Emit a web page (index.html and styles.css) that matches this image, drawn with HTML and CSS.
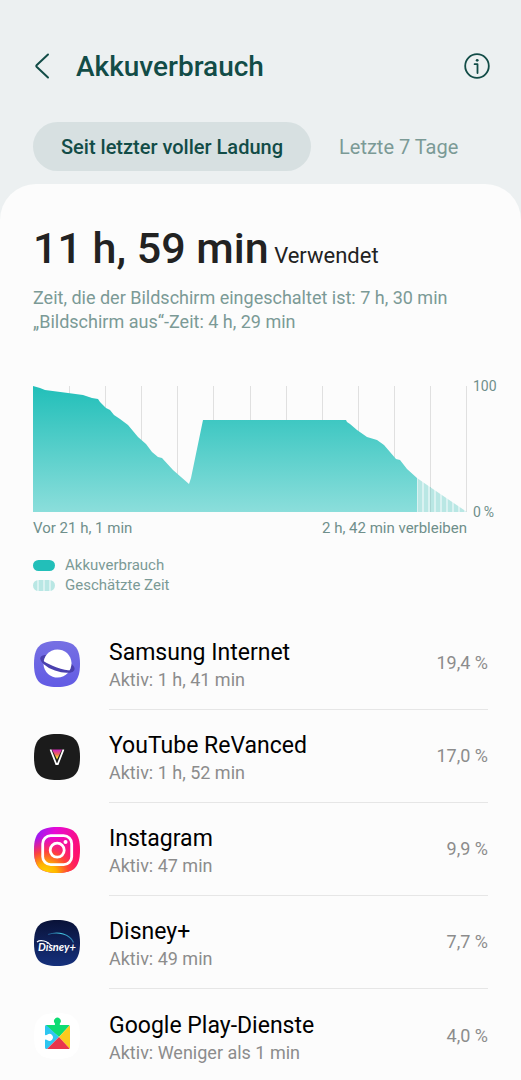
FILE: index.html
```html
<!DOCTYPE html>
<html lang="de">
<head>
    <meta charset="UTF-8">
    <meta name="viewport" content="width=device-width, initial-scale=1.0">
    <title>Akkuverbrauch</title>
    <link rel="stylesheet" href="styles.css">
</head>
<body>

    <header class="header">
        <button class="icon-btn" aria-label="Zurück">
            <svg width="18" height="28" viewBox="0 0 18 28"><path d="M15 2.500 L3.600 13.200 Q2.800 14 3.600 14.800 L15 25.500" fill="none" stroke="currentColor" stroke-width="2" stroke-linecap="round"/></svg>
        </button>
        <h1 class="title">Akkuverbrauch</h1>
        <button class="icon-btn" aria-label="Info">
            <svg width="26" height="26" viewBox="0 0 26 26" fill="none" stroke="currentColor">
                <circle cx="13" cy="13" r="11.8" stroke-width="1.8"/>
                <path d="M10.6 11.2 H13.5 V20" stroke-width="1.8" stroke-linejoin="round" stroke-linecap="round"/>
                <circle cx="13.2" cy="7.3" r="1.4" fill="currentColor" stroke="none"/>
            </svg>
        </button>
    </header>

    <nav class="tabs">
        <button class="tab active">Seit letzter voller Ladung</button>
        <button class="tab">Letzte 7 Tage</button>
    </nav>

    <main class="card">
        <!-- Summary -->
        <section class="summary">
            <p class="total"><strong>11 h, 59 min</strong> Verwendet</p>
            <p class="details">Zeit, die der Bildschirm eingeschaltet ist: 7 h, 30 min<br>„Bildschirm aus“-Zeit: 4 h, 29 min</p>
        </section>

        <!-- Battery chart -->
        <section class="chart">
            <svg class="plot" viewBox="0 0 434 126" preserveAspectRatio="none" role="img" aria-label="Akkuverlauf">
                <defs>
                    <linearGradient id="level" x1="0" y1="0" x2="0" y2="126" gradientUnits="userSpaceOnUse">
                        <stop offset="0" stop-color="#22bfb9"/>
                        <stop offset="1" stop-color="#8bdedb"/>
                    </linearGradient>
                    <pattern id="stripes" x="384" width="6" height="126" patternUnits="userSpaceOnUse">
                        <rect width="6" height="126" fill="#d9f2f1"/>
                        <rect x="1" width="4" height="126" fill="#b9e7e4"/>
                    </pattern>
                </defs>
                <path d="M36.5 0V126M72.5 0V126M108.5 0V126M144.5 0V126M180.5 0V126M217.5 0V126M253.5 0V126M289.5 0V126M325.5 0V126M361.5 0V126M397.5 0V126M433.5 0V126" stroke="#e0e0e0" stroke-width="1"/>
                <path d="M0 0 L7 2 L12 4 L35 7 L50 9 L59 12 L65 13 L67 16 L73 22 L77 24 L81 29 L87 33 L95 39 L105 51 L113 58 L119 66 L125 71 L129 72 L140 84 L156 98 L158 92 L170 34 H313 L314 36 L317 38 L324 44 L334 51 L344 54 L351 59 L363 73 L367 74 L374 83 L384 92 V126 H0 Z" fill="url(#level)"/>
                <path d="M384 92 L397 101 L434 126 H384 Z" fill="url(#stripes)"/>
                <path d="M397.5 101V126" stroke="#a9d5d2"/>
            </svg>
            <div class="y-axis"><span>100</span><span>0&thinsp;%</span></div>
            <div class="x-axis"><span>Vor 21 h, 1 min</span><span>2 h, 42 min verbleiben</span></div>
        </section>

        <ul class="legend">
            <li><span class="swatch"></span>Akkuverbrauch</li>
            <li><span class="swatch estimated"></span>Geschätzte Zeit</li>
        </ul>

        <!-- App list -->
        <ul class="apps">
            <li class="app">
                <svg class="app-icon" viewBox="0 0 48 48">
                    <defs>
                        <linearGradient id="internet" x1="0" y1="0" x2="0" y2="1">
                            <stop offset="0" stop-color="#7670e3"/>
                            <stop offset="1" stop-color="#625be4"/>
                        </linearGradient>
                    </defs>
                    <path d="M24 1C41 1 47 7 47 24S41 47 24 47S1 41 1 24S7 1 24 1Z" fill="url(#internet)"/>
                    <g transform="translate(24.5 23.5) rotate(20)">
                        <ellipse rx="18" ry="6.5" fill="#4a40ae"/>
                        <circle r="14" fill="#fff"/>
                        <path d="M-18 0A18 7.5 0 0 0 18 0C17 2 11 4 0 4S-17 2 -18 0Z" fill="#4a40ae"/>
                    </g>
                </svg>
                <div class="info">
                    <div class="text"><h2>Samsung Internet</h2><p>Aktiv: 1 h, 41 min</p></div>
                    <span class="percent">19,4 %</span>
                </div>
            </li>
            <li class="app">
                <svg class="app-icon" viewBox="0 0 48 48">
                    <defs>
                        <linearGradient id="vanced" x1="0" y1="0" x2="0" y2="1">
                            <stop offset="0.1" stop-color="#d32bb0"/>
                            <stop offset="0.5" stop-color="#f06a55"/>
                            <stop offset="0.8" stop-color="#f7dc3c"/>
                        </linearGradient>
                    </defs>
                    <path d="M24 1C41 1 47 7 47 24S41 47 24 47S1 41 1 24S7 1 24 1Z" fill="#1b1b1b"/>
                    <path d="M19 16.500H29L24 26.500Z" fill="url(#vanced)"/>
                    <path d="M17.500 16.500L23.200 31H24.800L30.500 16.500" fill="none" stroke="#fff" stroke-width="1.8"/>
                </svg>
                <div class="info">
                    <div class="text"><h2>YouTube ReVanced</h2><p>Aktiv: 1 h, 52 min</p></div>
                    <span class="percent">17,0 %</span>
                </div>
            </li>
            <li class="app">
                <svg class="app-icon" viewBox="0 0 48 48">
                    <defs>
                        <linearGradient id="insta" x1="0" y1="0" x2="1" y2="0.5">
                            <stop offset="0" stop-color="#7b22ff"/>
                            <stop offset="0.4" stop-color="#e70ad4"/>
                            <stop offset="1" stop-color="#ff126b"/>
                        </linearGradient>
                        <radialGradient id="insta-glow" cx="0.25" cy="1.05" r="0.85">
                            <stop offset="0" stop-color="#ffdc00"/>
                            <stop offset="0.3" stop-color="#ffb300"/>
                            <stop offset="0.6" stop-color="#ff4a2c" stop-opacity="0.9"/>
                            <stop offset="1" stop-color="#ff1470" stop-opacity="0"/>
                        </radialGradient>
                    </defs>
                    <path d="M24 1C41 1 47 7 47 24S41 47 24 47S1 41 1 24S7 1 24 1Z" fill="url(#insta)"/>
                    <path d="M24 1C41 1 47 7 47 24S41 47 24 47S1 41 1 24S7 1 24 1Z" fill="url(#insta-glow)"/>
                    <rect x="9.7" y="9.7" width="29" height="29" rx="8" fill="none" stroke="#fff" stroke-width="2.8"/>
                    <circle cx="24.2" cy="24.2" r="7" fill="none" stroke="#fff" stroke-width="2.8"/>
                    <circle cx="32.5" cy="16" r="2" fill="#fff"/>
                </svg>
                <div class="info">
                    <div class="text"><h2>Instagram</h2><p>Aktiv: 47 min</p></div>
                    <span class="percent">9,9 %</span>
                </div>
            </li>
            <li class="app">
                <svg class="app-icon" viewBox="0 0 48 48">
                    <defs>
                        <linearGradient id="disney" x1="0" y1="0" x2="0" y2="1">
                            <stop offset="0" stop-color="#091238"/>
                            <stop offset="1" stop-color="#15307c"/>
                        </linearGradient>
                        <linearGradient id="arc" x1="0" y1="0" x2="1" y2="0">
                            <stop offset="0" stop-color="#1b4a85"/>
                            <stop offset="0.5" stop-color="#45d0e8"/>
                            <stop offset="1" stop-color="#2a77ac"/>
                        </linearGradient>
                    </defs>
                    <path d="M24 1C41 1 47 7 47 24S41 47 24 47S1 41 1 24S7 1 24 1Z" fill="url(#disney)"/>
                    <path d="M15 15.5C25 12 37 15 40.500 23.500" fill="none" stroke="url(#arc)" stroke-width="1.2"/>
                    <path d="M4 23C7 20.500 15 21.500 18 27" fill="none" stroke="#fff" stroke-width="1.2"/>
                    <text class="disney-text" x="5" y="32">Disney+</text>
                </svg>
                <div class="info">
                    <div class="text"><h2>Disney+</h2><p>Aktiv: 49 min</p></div>
                    <span class="percent">7,7 %</span>
                </div>
            </li>
            <li class="app">
                <svg class="app-icon" viewBox="0 0 48 48">
                    <defs>
                        <clipPath id="puzzle">
                            <path d="M13 13H21.5C22.5 13 22 11.5 21.600 11A3.400 3.400 0 1 1 27.200 11C26.800 11.5 26.300 13 27.300 13H35.500Q37 13 37 14.500V35.500Q37 37 35.500 37H13.500Q12 37 12 35.500V28C12 27 13.500 27.500 14.500 28.300A3.500 3.500 0 1 0 14.500 22.400C13.500 23.200 12 23.500 12 22.500V14.500Q12 13 13.500 13Z"/>
                        </clipPath>
                    </defs>
                    <path d="M24 1C41 1 47 7 47 24S41 47 24 47S1 41 1 24S7 1 24 1Z" fill="#fff"/>
                    <g clip-path="url(#puzzle)">
                        <path d="M12 4H37V13L26 25L12 13Z" fill="#0ddc72"/>
                        <path d="M12 12L26 25L14 37H12Z" fill="#2ec6f1"/>
                        <path d="M37 13V37L26 25Z" fill="#fbca1e"/>
                        <path d="M14 37L26 25L37 37Z" fill="#e9354c"/>
                    </g>
                </svg>
                <div class="info">
                    <div class="text"><h2>Google Play-Dienste</h2><p>Aktiv: Weniger als 1 min</p></div>
                    <span class="percent">4,0 %</span>
                </div>
            </li>
        </ul>
    </main>

</body>
</html>
```
FILE: styles.css
```css
* {
    box-sizing: border-box;
}

body {
    margin: 0;
    background-color: #ecf0f1;
    font-family: Roboto, "Liberation Sans", sans-serif;
    color: #222;
}

h1, h2, p, ul {
    margin: 0;
    padding: 0;
    font-weight: 400;
}

ul {
    list-style: none;
}

button {
    padding: 0;
    border: none;
    background: none;
    font: inherit;
    cursor: pointer;
}

.header {
    display: flex;
    align-items: center;
    padding: 45px 31px 0 33px;
    color: #124c47;
}

.icon-btn {
    display: flex;
    align-items: center;
    height: 40px;
    color: inherit;
}

.title {
    flex: 1;
    padding: 2px 0 0 25px;
    font-size: 28px;
    font-weight: 500;
    line-height: 40px;
}

.tabs {
    display: flex;
    padding: 35px 33px 13px;
}

.tab {
    height: 49px;
    padding: 0 28px;
    border-radius: 25px;
    font-size: 20px;
    color: #7b9a96;
}

.tab.active {
    background-color: #d7e0e1;
    font-weight: 500;
    color: #124c47;
}

.card {
    min-height: calc(100vh - 184px);
    padding-top: 36px;
    border-radius: 36px 36px 0 0;
    background-color: #fcfcfc;
}

.summary {
    padding: 0 33px;
}

.total {
    font-size: 22px;
    line-height: 56px;
}

.total strong {
    font-size: 43px;
    font-weight: 500;
}

.details {
    padding-top: 2px;
    font-size: 18px;
    line-height: 24px;
    color: #7b9a96;
}

.chart {
    display: grid;
    grid-template-columns: 1fr 24px;
    column-gap: 6px;
    padding: 52px 24px 0 33px;
    color: #6f8f8b;
}

.plot {
    display: block;
    width: 100%;
    height: 126px;
}

.y-axis {
    display: flex;
    flex-direction: column;
    justify-content: space-between;
    margin: -8px 0;
    font-size: 14px;
    line-height: 16px;
    white-space: nowrap;
}

.x-axis {
    display: flex;
    justify-content: space-between;
    padding-top: 6px;
    font-size: 15px;
    line-height: 20px;
}

.legend {
    padding: 17px 33px 0;
    font-size: 15px;
    line-height: 20px;
    color: #7b9a96;
}

.legend li {
    display: flex;
    align-items: center;
    gap: 10px;
}

.swatch {
    width: 22px;
    height: 11px;
    border-radius: 6px;
    background-color: #22bfb9;
}

.swatch.estimated {
    background: repeating-linear-gradient(90deg, #b9e7e4 0 4px, #d9f2f1 4px 6px);
}

.apps {
    padding: 22px 33px 0;
}

.app {
    display: flex;
    align-items: center;
    gap: 28px;
    height: 93px;
}

.app-icon {
    flex: none;
    width: 48px;
    height: 48px;
}

.disney-text {
    font: italic 700 11px Lato, sans-serif;
    fill: #fff;
}

.info {
    flex: 1;
    display: flex;
    align-items: center;
    justify-content: space-between;
    height: 93px;
    border-bottom: 1px solid #e6e6e6;
}

.app:last-child .info {
    border-bottom: none;
}

.text {
    padding-top: 4px;
}

.info h2 {
    font-size: 23px;
    line-height: 30px;
    color: #000;
}

.info p,
.percent {
    font-size: 18px;
    line-height: 24px;
    color: #8c8c8c;
}
```
